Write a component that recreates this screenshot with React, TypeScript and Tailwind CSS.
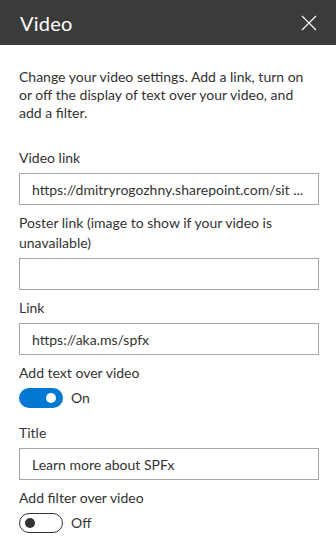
import { useState } from 'react';

function Field({ label, value }: { label: string; value: string }) {
  return (
    <div className="mb-[3px]">
      <label className="block py-[5px] leading-5">{label}</label>
      <input
        type="text"
        readOnly
        value={value}
        className="block h-8 w-[300px] border border-[#a6a6a6] bg-white px-3 text-[14px] text-[#333] outline-none"
      />
    </div>
  );
}

function Toggle({ label, on }: { label: string; on: boolean }) {
  return (
    <div className="mb-[10px]">
      <label className="block py-[5px] leading-5">{label}</label>
      <div className="flex h-5 items-center">
        {on ? (
          <span className="flex h-5 w-11 items-center justify-end rounded-full bg-[#0078d4] px-[7px]">
            <span className="h-[10px] w-[10px] rounded-full bg-white" />
          </span>
        ) : (
          <span className="flex h-5 w-11 items-center rounded-full border border-[#333] px-[5px]">
            <span className="h-[10px] w-[10px] rounded-full bg-[#333]" />
          </span>
        )}
        <span className="ml-2 leading-5">{on ? 'On' : 'Off'}</span>
      </div>
    </div>
  );
}

export default function App() {
  const [fields] = useState({
    video: 'https://dmitryrogozhny.sharepoint.com/sit ...',
    poster: '',
    link: 'https://aka.ms/spfx',
    title: 'Learn more about SPFx',
  });

  return (
    <div className="h-[547px] w-[336px] overflow-hidden bg-white font-['Lato',sans-serif] text-[14px] text-[#333]">
      <div className="flex h-[45px] items-center justify-between bg-[#3b3b3b] pl-5 pr-[19px]">
        <h1 className="text-[20px] font-normal tracking-[0.2px] text-white">Video</h1>
        <svg width="16" height="16" viewBox="0 0 16 16" className="text-white">
          <path d="M1 1 L15 15 M15 1 L1 15" stroke="currentColor" strokeWidth="1.1" fill="none" />
        </svg>
      </div>

      <div className="pl-[19px] pt-[23px]">
        <p className="mb-[21px] w-[300px] leading-[18px]">
          Change your video settings. Add a link, turn on or off the display of text over your video, and add a filter.
        </p>

        <Field label="Video link" value={fields.video} />
        <Field label="Poster link (image to show if your video is unavailable)" value={fields.poster} />
        <Field label="Link" value={fields.link} />
        <Toggle label="Add text over video" on={true} />
        <Field label="Title" value={fields.title} />
        <Toggle label="Add filter over video" on={false} />
      </div>
    </div>
  );
}
